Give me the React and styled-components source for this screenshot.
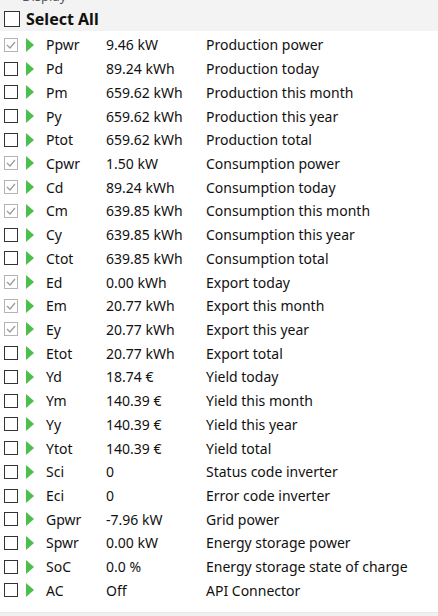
import styled, { createGlobalStyle } from "styled-components"

const Global = createGlobalStyle`
  html, body { margin: 0; padding: 0; background: #fff; }
  body { font-family: "Noto Sans", "Open Sans", sans-serif; color: #111; }
`

const rows = [
  ["Ppwr", "9.46 kW", "Production power", true],
  ["Pd", "89.24 kWh", "Production today"],
  ["Pm", "659.62 kWh", "Production this month"],
  ["Py", "659.62 kWh", "Production this year"],
  ["Ptot", "659.62 kWh", "Production total"],
  ["Cpwr", "1.50 kW", "Consumption power", true],
  ["Cd", "89.24 kWh", "Consumption today", true],
  ["Cm", "639.85 kWh", "Consumption this month", true],
  ["Cy", "639.85 kWh", "Consumption this year"],
  ["Ctot", "639.85 kWh", "Consumption total"],
  ["Ed", "0.00 kWh", "Export today", true],
  ["Em", "20.77 kWh", "Export this month", true],
  ["Ey", "20.77 kWh", "Export this year", true],
  ["Etot", "20.77 kWh", "Export total"],
  ["Yd", "18.74 €", "Yield today"],
  ["Ym", "140.39 €", "Yield this month"],
  ["Yy", "140.39 €", "Yield this year"],
  ["Ytot", "140.39 €", "Yield total"],
  ["Sci", "0", "Status code inverter"],
  ["Eci", "0", "Error code inverter"],
  ["Gpwr", "-7.96 kW", "Grid power"],
  ["Spwr", "0.00 kW", "Energy storage power"],
  ["SoC", "0.0 %", "Energy storage state of charge"],
  ["AC", "Off", "API Connector"],
]

const Page = styled.div`
  width: 438px;
  height: 616px;
  display: flex;
  flex-direction: column;
  overflow: hidden;
  background: #fff;
`

const Header = styled.div`
  height: 31px;
  background: #f3f3f3;
  display: flex;
  flex-direction: column;
  overflow: hidden;
  flex-shrink: 0;
`

const Caption = styled.div`
  font-size: 13px;
  line-height: 13px;
  color: #555;
  margin-top: -10px;
  padding-left: 22px;
  height: 13px;
`

const SelectAllRow = styled.label`
  display: flex;
  align-items: center;
  gap: 6px;
  margin-top: 7px;
  padding-left: 4px;
  font-size: 16px;
  line-height: 18px;
  font-weight: 700;
  color: #111;
`

const Box = styled.span`
  box-sizing: border-box;
  width: ${(p) => p.$size}px;
  height: ${(p) => p.$size}px;
  border: 1px solid ${(p) => (p.$checked ? "#b4b4b4" : "#333")};
  background: #fff;
  display: flex;
  align-items: center;
  justify-content: center;
  flex-shrink: 0;
`

const List = styled.div`
  flex: 1;
  display: flex;
  flex-direction: column;
  padding-top: 2px;
`

const Row = styled.div`
  height: 23.72px;
  display: flex;
  align-items: center;
  padding-left: 4px;
  font-size: 14px;
  color: #111;
`

const Arrow = styled.span`
  width: 0;
  height: 0;
  border-top: 7px solid transparent;
  border-bottom: 7px solid transparent;
  border-left: 8px solid #4cbe4c;
  margin-left: 8px;
  flex-shrink: 0;
`

const Code = styled.span`
  width: 60px;
  margin-left: 12px;
  white-space: nowrap;
`

const Value = styled.span`
  width: 100px;
  white-space: nowrap;
`

const Desc = styled.span`
  white-space: nowrap;
`

const Footer = styled.div`
  height: 3px;
  background: #f0f0f0;
  border-top: 1px solid #e8e8e8;
`

function Check({ checked, size = 14 }) {
  return (
    <Box $checked={checked} $size={size}>
      {checked && (
        <svg width="10" height="8" viewBox="0 0 10 8">
          <path d="M1 4 L4 7 L9 1" fill="none" stroke="#999" strokeWidth="1.2" />
        </svg>
      )}
    </Box>
  )
}

export default function App() {
  return (
    <Page>
      <Global />
      <Header>
        <Caption>Display</Caption>
        <SelectAllRow>
          <Check size={16} />
          Select All
        </SelectAllRow>
      </Header>
      <List>
        {rows.map(([c, v, d, on]) => (
          <Row key={c}>
            <Check checked={on} />
            <Arrow />
            <Code>{c}</Code>
            <Value>{v}</Value>
            <Desc>{d}</Desc>
          </Row>
        ))}
      </List>
      <Footer />
    </Page>
  )
}
